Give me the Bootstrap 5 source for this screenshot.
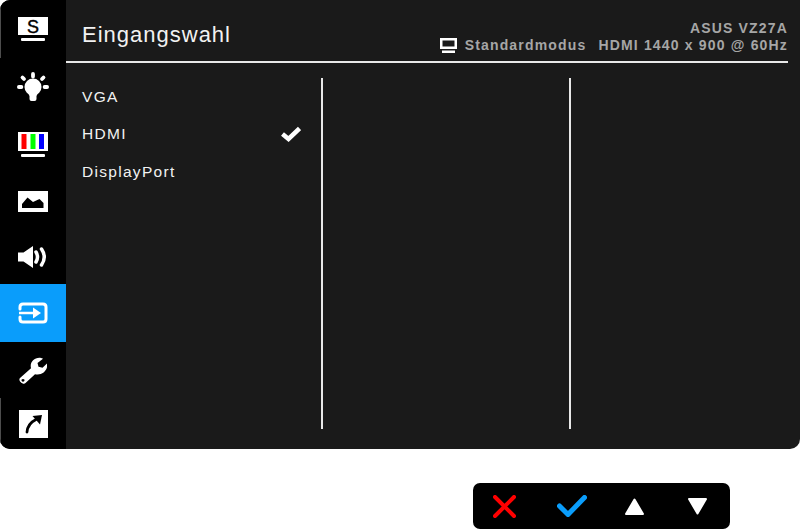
<!DOCTYPE html>
<html lang="de">
<head>
<meta charset="utf-8">
<title>OSD Eingangswahl</title>
<link href="https://cdn.jsdelivr.net/npm/bootstrap@5.3.0/dist/css/bootstrap.min.css" rel="stylesheet">
<style>
html,body{margin:0;background:#fff;width:800px;height:530px;overflow:hidden;font-family:"Liberation Sans",Arial,sans-serif}
.osd-panel{width:800px;height:449px;background:#1a1a1a;border-radius:10px 0 10px 10px;overflow:hidden}
.osd-side{width:66px;flex:none;background:#000}
.osd-item{flex:none}
.osd-item svg{display:block}
.osd-item:nth-child(1){height:58px;box-shadow:inset 1px 0 0 #4d4d4d}
.osd-item:nth-child(2){height:58px}
.osd-item:nth-child(3){height:56px}
.osd-item:nth-child(4){height:58px}
.osd-item:nth-child(5){height:54px}
.osd-item:nth-child(6){height:58px;background:#0a9dfb}
.osd-item:nth-child(7){height:56px}
.osd-item:nth-child(8){height:51px;box-shadow:inset 1px 0 0 #4d4d4d}
.osd-main{padding-left:16px;padding-right:12px}
.osd-head{height:63px;border-bottom:2px solid #e8e8e8;margin-left:-16px;padding-left:16px}
.osd-title{font-size:22px;letter-spacing:1px;color:#f2f2f2;line-height:26px;padding-top:22px}
.osd-info{color:#a6a6a6;font-weight:700;font-size:14px;letter-spacing:1.17px;line-height:17px;padding-top:20px;text-align:right}
.osd-info svg{margin-right:8px}
.osd-info .osd-sig{margin-left:12px}
.osd-cols{padding-top:15px;height:366px}
.osd-col1{width:241px;height:351px;border-right:2px solid #e8e8e8;flex:none}
.osd-col2{width:248px;height:351px;border-right:2px solid #e8e8e8;flex:none}
.osd-opt{height:38px;margin-top:-.5px;color:#f2f2f2;font-size:15.5px;letter-spacing:1.3px;padding-right:20px}
.osd-keys{width:257px;height:46px;background:#000;border-radius:7px;margin-left:473px;margin-top:34px;padding-left:20px}
.osd-keys svg:nth-child(2){margin-left:41px}
.osd-keys svg:nth-child(3){margin-left:38px}
.osd-keys svg:nth-child(4){margin-left:44px}
</style>
</head>
<body>
<div class="osd-panel d-flex">
  <nav class="osd-side d-flex flex-column">
    <div class="osd-item d-flex justify-content-center align-items-center">
      <svg width="30" height="24" viewBox="0 0 30 24"><rect width="30" height="18" fill="#fff"/><text x="15" y="15.500" text-anchor="middle" font-family="Liberation Sans" font-size="18" stroke="#000" stroke-width=".4" fill="#000">S</text><rect x="3" y="21" width="24" height="3" rx="1" fill="#fff"/></svg>
    </div>
    <div class="osd-item d-flex justify-content-center align-items-center">
      <svg width="32" height="30" viewBox="0 0 32 30"><g fill="#fff"><circle cx="16" cy="15" r="8.500"/><path d="M10 19h12l-2.500 5v3q0 2-2 2h-3q-2 0-2-2v-3z"/></g><path stroke="#fff" stroke-width="3.800" stroke-linecap="round" d="M16 2v2.500M5.500 5.500l1.500 1.500M26.500 5.500L25 7M1.900 15h2.500M27.600 15h2.500"/></svg>
    </div>
    <div class="osd-item d-flex justify-content-center align-items-center">
      <svg width="30" height="25" viewBox="0 0 30 25"><rect width="30" height="19" fill="#fff"/><rect x="3.500" y="2" width="5" height="15" fill="#f00"/><rect x="12.500" y="2" width="5" height="15" fill="#0f0"/><rect x="21" y="2" width="5" height="15" fill="#00f"/><rect x="3" y="22" width="24" height="3" rx="1" fill="#fff"/></svg>
    </div>
    <div class="osd-item d-flex justify-content-center align-items-center">
      <svg width="30" height="21" viewBox="0 0 30 21"><path fill="#fff" fill-rule="evenodd" d="M0 0h30v21H0zM4 17h21.500v-5l-4-4-6.500 3-5.500-4.500L4 13z"/></svg>
    </div>
    <div class="osd-item d-flex justify-content-center align-items-center">
      <svg width="30" height="22" viewBox="0 0 30 22"><path fill="#fff" d="M0 6.500h5.500L15 0v22L5.500 15.500H0z"/><path fill="none" stroke="#fff" stroke-width="3.500" stroke-linecap="round" d="M18 6q3 5 0 10M23.500 3q5.500 8 0 16"/></svg>
    </div>
    <div class="osd-item d-flex justify-content-center align-items-center">
      <svg width="30" height="22" viewBox="0 0 30 22"><path fill="none" stroke="#fff" stroke-width="3" stroke-linecap="round" d="M2 7V5q0-3 3-3h20q3 0 3 3v12q0 3-3 3H5q-3 0-3-3v-2"/><path fill="none" stroke="#fff" stroke-width="2.500" d="M1 11h15"/><path fill="#fff" d="M15 5.500l8 5.500-8 5.500z"/></svg>
    </div>
    <div class="osd-item d-flex justify-content-center align-items-center">
      <svg width="28" height="27" viewBox="0 0 28 29" preserveAspectRatio="none"><path fill="#fff" fill-rule="evenodd" d="M1 22.500L12 12C10.500 6 15 0 22 1q1 0 2 1l-5.500 4.500 1 4 4 1L28 7c1.500 7-5 13.500-12 11.500L6.500 28c-2.500 2.500-8-3-5.500-5.500zM4 23.500a1.500 1.500 0 1 0 .01 0z"/></svg>
    </div>
    <div class="osd-item d-flex justify-content-center align-items-center">
      <svg width="29" height="28" viewBox="0 0 29 28"><rect width="29" height="28" fill="#fff"/><path fill="none" stroke="#000" stroke-width="2.800" stroke-linecap="round" d="M8 22C8.500 16 12 12 17 9.500"/><path fill="#000" d="M13.500 6L23 5l-2 9.500z"/></svg>
    </div>
  </nav>
  <main class="osd-main flex-grow-1">
    <header class="osd-head d-flex justify-content-between">
      <div class="osd-title">Eingangswahl</div>
      <div class="osd-info">
        <div>ASUS VZ27A</div>
        <div class="d-flex align-items-center justify-content-end">
          <svg width="17" height="15" viewBox="0 0 17 15"><path fill="#fff" fill-rule="evenodd" d="M0 0h17v11H0zM2.500 2.500v6h12v-6z"/><rect x="2" y="12.500" width="13" height="2.500" fill="#fff"/></svg>
          <span>Standardmodus</span><span class="osd-sig">HDMI 1440 x 900 @ 60Hz</span>
        </div>
      </div>
    </header>
    <section class="osd-cols d-flex">
      <div class="osd-col1">
        <div class="osd-opt d-flex align-items-center justify-content-between">VGA</div>
        <div class="osd-opt d-flex align-items-center justify-content-between">HDMI
          <svg width="20" height="16" viewBox="0 0 20 16"><path fill="none" stroke="#fff" stroke-width="4.500" d="M1.500 8l6 5L18.500 2.500"/></svg>
        </div>
        <div class="osd-opt d-flex align-items-center justify-content-between">DisplayPort</div>
      </div>
      <div class="osd-col2"></div>
    </section>
  </main>
</div>
<div class="osd-keys d-flex align-items-center">
  <svg width="23" height="23" viewBox="0 0 23 23"><path stroke="#f00" stroke-width="4" stroke-linecap="round" d="M2 2l19 19M21 2L2 21"/></svg>
  <svg width="30" height="22" viewBox="0 0 30 22"><path fill="none" stroke="#0a9dfb" stroke-width="5" stroke-linecap="round" stroke-linejoin="round" d="M2.500 11l8.500 8.500L27.500 2.500"/></svg>
  <svg width="19" height="17" viewBox="0 0 19 17"><path fill="#fff" stroke="#fff" stroke-width="2" stroke-linejoin="round" d="M9.500 1.500L18 16H1z"/></svg>
  <svg width="19" height="17" viewBox="0 0 19 17"><path fill="#fff" stroke="#fff" stroke-width="2" stroke-linejoin="round" d="M9.500 15.500L18 1H1z"/></svg>
</div>
<script src="https://cdn.jsdelivr.net/npm/bootstrap@5.3.0/dist/js/bootstrap.bundle.min.js"></script>
</body>
</html>
